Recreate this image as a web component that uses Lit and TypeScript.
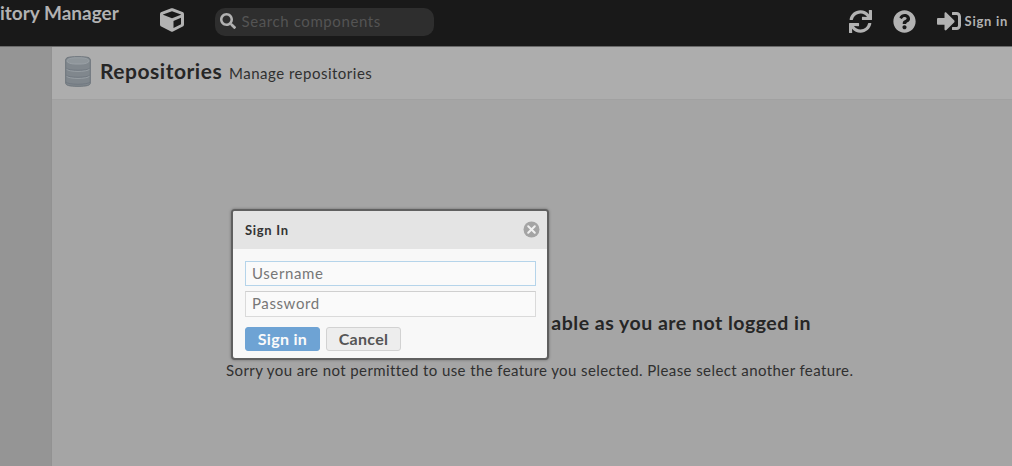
import { LitElement, html, css, svg } from "lit";
import { customElement } from "lit/decorators.js";

const ICONS: Record<string, string> = {
  cube: "M239.1 6.3l-208 78c-18.7 7-31.1 25-31.1 45v225.1c0 18.2 10.3 34.8 26.5 42.9l208 104c13.5 6.8 29.4 6.8 42.9 0l208-104c16.3-8.1 26.5-24.8 26.5-42.9V129.3c0-20-12.4-37.9-31.1-44.9l-208-78C262 2.2 250 2.2 239.1 6.3zM256 68.4l192 72v1.1l-192 78-192-78v-1.1l192-72zm32 356V275.5l160-65v133.9l-160 80z",
  search: "M505 442.7L405.3 343c-4.5-4.5-10.6-7-17-7H372c27.6-35.3 44-79.7 44-128C416 93.1 322.9 0 208 0S0 93.1 0 208s93.1 208 208 208c48.3 0 92.7-16.4 128-44v16.3c0 6.4 2.5 12.5 7 17l99.7 99.7c9.4 9.4 24.6 9.4 33.9 0l28.3-28.3c9.4-9.4 9.4-24.6.1-34zM208 336c-70.7 0-128-57.2-128-128 0-70.7 57.2-128 128-128 70.7 0 128 57.2 128 128 0 70.7-57.2 128-128 128z",
  refresh: "M440.65 12.57l4 82.77A247.16 247.16 0 0 0 255.83 8C134.73 8 33.91 94.92 12.29 209.82A12 12 0 0 0 24.09 224h49.05a12 12 0 0 0 11.67-9.26 175.91 175.91 0 0 1 317-56.94l-101.46-4.86a12 12 0 0 0-12.57 12v47.41a12 12 0 0 0 12 12H500a12 12 0 0 0 12-12V12a12 12 0 0 0-12-12h-47.37a12 12 0 0 0-11.98 12.57zM255.83 432a175.61 175.61 0 0 1-146-77.8l101.8 4.87a12 12 0 0 0 12.57-12v-47.4a12 12 0 0 0-12-12H12a12 12 0 0 0-12 12V500a12 12 0 0 0 12 12h47.35a12 12 0 0 0 12-12.6l-4.15-82.57A247.17 247.17 0 0 0 255.83 504c121.11 0 221.93-86.92 243.55-201.82a12 12 0 0 0-11.8-14.18h-49.05a12 12 0 0 0-11.67 9.26A175.86 175.86 0 0 1 255.83 432z",
  help: "M504 256c0 136.997-111.043 248-248 248S8 392.997 8 256C8 119.083 119.043 8 256 8s248 111.083 248 248zM262.655 90c-54.497 0-89.255 22.957-116.549 63.758-3.536 5.286-2.353 12.415 2.715 16.258l34.699 26.31c5.205 3.947 12.621 3.008 16.665-2.122 17.864-22.658 30.113-35.797 57.303-35.797 20.429 0 45.698 13.148 45.698 32.958 0 14.976-12.363 22.667-32.534 33.976C247.128 238.528 216 254.941 216 296v4c0 6.627 5.373 12 12 12h56c6.627 0 12-5.373 12-12v-1.333c0-28.462 83.186-29.647 83.186-106.667 0-58.002-60.165-102-116.531-102zM256 338c-25.365 0-46 20.635-46 46 0 25.364 20.635 46 46 46s46-20.636 46-46c0-25.365-20.635-46-46-46z",
  signin: "M416 448h-84c-6.6 0-12-5.4-12-12v-40c0-6.6 5.4-12 12-12h84c17.7 0 32-14.3 32-32V160c0-17.7-14.3-32-32-32h-84c-6.6 0-12-5.4-12-12V76c0-6.6 5.4-12 12-12h84c53 0 96 43 96 96v192c0 53-43 96-96 96zm-47-201L201 79c-15-15-41-4.5-41 17v96H24c-13.3 0-24 10.7-24 24v96c0 13.3 10.7 24 24 24h136v96c0 21.5 26 32 41 17l168-168c9.3-9.4 9.3-24.6 0-34z",
};

const icon = (name: string, cls: string) =>
  html`<svg class="icon ${cls}" viewBox="0 0 512 512" aria-hidden="true">${svg`<path d=${ICONS[name]}></path>`}</svg>`;

@customElement("nx-topbar")
class NxTopbar extends LitElement {
  static styles = css`
    :host {
      display: flex;
      align-items: flex-start;
      box-sizing: border-box;
      height: 47px;
      background: #191919;
      border-bottom: 1px solid #6a6a6a;
      color: #b2b2b2;
      white-space: nowrap;
    }
    .icon { display: block; fill: #b2b2b2; flex: none; }
    .brand { width: 160px; font-size: 19px; line-height: 26px; font-weight: 700; }
    .cube { width: 24px; height: 24px; margin-top: 8px; }
    .search {
      display: flex;
      align-items: center;
      gap: 6px;
      box-sizing: border-box;
      width: 219px;
      height: 28px;
      margin: 8px 0 0 30.5px;
      padding-left: 5px;
      border-radius: 10px;
      background: #2e2e2e;
      color: #545454;
      font-size: 15px;
      letter-spacing: 0.6px;
    }
    .search span { margin-top: -3px; }
    .glass { width: 16px; height: 16px; margin-top: -3px; }
    .actions { display: flex; align-items: center; margin-left: auto; height: 42px; padding-right: 4px; }
    .refresh { width: 23px; height: 23px; margin-right: 21px; }
    .help { width: 23px; height: 23px; margin-right: 21px; }
    .signin { width: 24px; height: 24px; margin-right: 4px; }
    .label { font-size: 13px; font-weight: 700; letter-spacing: 0.75px; margin-right: -0.2px; }
  `;
  render() {
    return html`
      <span class="brand">itory Manager</span>
      ${icon("cube", "cube")}
      <div class="search">${icon("search", "glass")}<span>Search components</span></div>
      <div class="actions">
        ${icon("refresh", "refresh")} ${icon("help", "help")} ${icon("signin", "signin")}
        <span class="label">Sign in</span>
      </div>
    `;
  }
}

@customElement("nx-sign-in")
class NxSignIn extends LitElement {
  static styles = css`
    :host {
      display: flex;
      flex-direction: column;
      box-sizing: border-box;
      border: 2px solid #606060;
      border-radius: 4px;
      background: #f8f8f8;
      overflow: hidden;
      box-shadow: 0 0 3px rgba(0, 0, 0, 0.35);
    }
    .title {
      display: flex;
      justify-content: space-between;
      align-items: center;
      box-sizing: border-box;
      height: 38px;
      padding: 0 7px 1px 12px;
      background: #e4e4e4;
      color: #333;
      font-size: 13px;
      font-weight: 700;
      letter-spacing: 0.7px;
    }
    .close { width: 17px; height: 17px; display: block; }
    .disc { fill: #a4a4a4; }
    .cross { stroke: #f0f0f0; stroke-width: 2; stroke-linecap: round; }
    .body { display: flex; flex-direction: column; padding: 12px 11px 0 12px; }
    .field {
      box-sizing: border-box;
      height: 26px;
      padding: 0 6px;
      border: 1px solid #dadada;
      border-top-color: #cfcfcf;
      background: #fafafa;
      color: #777;
      font-size: 15px;
      line-height: 23px;
      letter-spacing: 0.6px;
    }
    .focused { height: 25px; margin-bottom: 5px; border: 1px solid #b5d4ea; }
    .buttons { display: flex; gap: 6px; margin-top: 10px; }
    .btn {
      box-sizing: border-box;
      width: 75px;
      height: 24px;
      border: 1px solid #d2d2d2;
      border-radius: 3px;
      background: #ededed;
      color: #555;
      font-size: 16px;
      line-height: 21px;
      font-weight: 700;
      letter-spacing: 0.3px;
      text-align: center;
    }
    .primary { background: #6ea3d4; border-color: #6ea3d4; color: #fafafa; }
  `;
  render() {
    return html`
      <div class="title">
        <span>Sign In</span>
        <svg class="close" viewBox="0 0 17 17">
          <circle class="disc" cx="8.5" cy="8.5" r="8"></circle>
          <path class="cross" d="M5.2 5.2l6.6 6.6M11.8 5.2l-6.6 6.6"></path>
        </svg>
      </div>
      <div class="body">
        <div class="field focused">Username</div>
        <div class="field">Password</div>
        <div class="buttons">
          <div class="btn primary">Sign in</div>
          <div class="btn">Cancel</div>
        </div>
      </div>
    `;
  }
}

@customElement("app-root")
class AppRoot extends LitElement {
  static styles = css`
    :host {
      display: flex;
      flex-direction: column;
      position: relative;
      width: 100%;
      height: 466px;
      overflow: hidden;
      background: #a5a5a5;
      color: #262626;
      font-family: Lato, "Open Sans", sans-serif;
      white-space: nowrap;
    }
    .columns { display: flex; flex: 1; }
    .side { box-sizing: border-box; width: 52px; background: #959595; border-right: 1px solid #929292; }
    .main { display: flex; flex-direction: column; flex: 1; }
    .feature {
      display: flex;
      align-items: flex-start;
      box-sizing: border-box;
      height: 53px;
      padding: 9px 0 0 13px;
      background: #adadad;
      border-bottom: 1px solid #a1a1a1;
    }
    .db { width: 26px; height: 31px; flex: none; }
    .can { fill: #80878d; stroke: #6c747b; stroke-width: 1; }
    .lid { fill: #8f969b; stroke: #9aa1a6; stroke-width: 1; }
    .ring { fill: none; stroke: #979ea3; stroke-width: 1; }
    .groove { fill: none; stroke: #6d757d; stroke-width: 0.8; }
    .name { margin-left: 9px; font-size: 21px; font-weight: 700; line-height: 30px; width: 129px; letter-spacing: 0.52px; }
    .desc { font-size: 15px; line-height: 34px; color: #303030; letter-spacing: 0.5px; }
    .message { display: flex; flex-direction: column; width: 627px; padding: 209px 0 0 174px; }
    .headline { align-self: flex-end; margin-right: 42px; font-size: 19.5px; line-height: 28px; font-weight: 700; letter-spacing: 0.5px; }
    .detail { margin-top: 20px; font-size: 15px; line-height: 26px; color: #303030; letter-spacing: 0.41px; }
    .dialog { position: absolute; left: 231px; top: 209px; width: 318px; height: 151px; }
  `;
  render() {
    return html`
      <nx-topbar></nx-topbar>
      <div class="columns">
        <div class="side"></div>
        <div class="main">
          <div class="feature">
            <svg class="db" viewBox="0 0 26 31">
              <path class="can" d="M.7 4C.7 1.6 3 .7 13 .7S25.3 1.6 25.3 4v23c0 2.4-3.3 3.3-12.3 3.3S.7 29.4 .7 27z"></path>
              <rect class="lid" x="2" y="1.8" width="22" height="6.2" rx="8" ry="3"></rect>
              <path class="groove" d="M1 12c2 3 22 3 24 0M1 19c2 3 22 3 24 0M1 26c2 3 22 3 24 0"></path>
              <path class="ring" d="M1.5 13.2c2 3 21 3 23 0M1.5 20.2c2 3 21 3 23 0"></path>
            </svg>
            <span class="name">Repositories</span>
            <span class="desc">Manage repositories</span>
          </div>
          <div class="message">
            <span class="headline">able as you are not logged in</span>
            <span class="detail">Sorry you are not permitted to use the feature you selected. Please select another feature.</span>
          </div>
        </div>
      </div>
      <nx-sign-in class="dialog"></nx-sign-in>
    `;
  }
}
